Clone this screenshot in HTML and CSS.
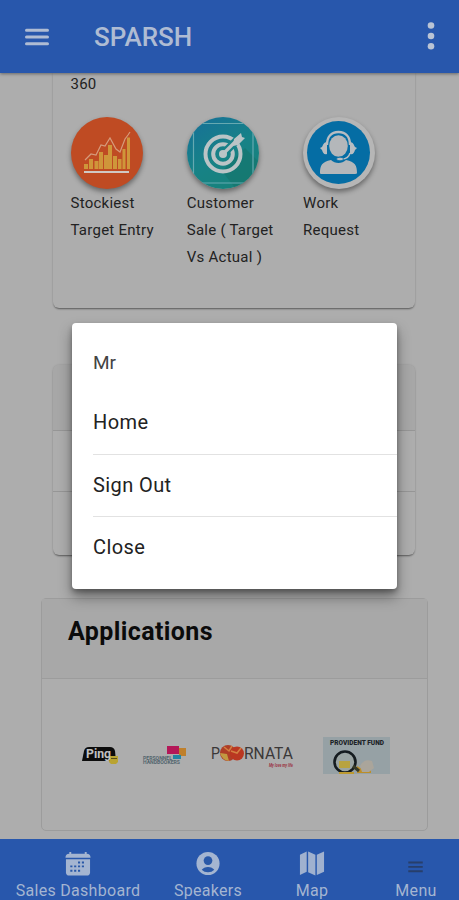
FILE: index.html
```
<!DOCTYPE html>
<html lang="en">
<head>
    <meta charset="UTF-8">
    <meta name="viewport" content="width=device-width, initial-scale=1.0">
    <title>SPARSH</title>
    <link rel="stylesheet" href="styles.css">
</head>
<body>
    <header class="navbar">
        <svg class="menu-icon" width="24" height="18" viewBox="0 0 24 18">
            <path d="M1.5 2.3h21M1.5 9h21M1.5 15.7h21" stroke="#afbcd3" stroke-width="3" stroke-linecap="round"/>
        </svg>
        <h1>SPARSH</h1>
        <svg class="more-icon" width="8" height="30" viewBox="0 0 8 30" fill="#bac4d5">
            <circle cx="4" cy="4.5" r="3.3"/>
            <circle cx="4" cy="15" r="3.3"/>
            <circle cx="4" cy="25.3" r="3.3"/>
        </svg>
    </header>

    <main class="content">
        <section class="card shortcuts">
            <div class="label-top">360</div>
            <div class="shortcut-row">
                <div class="shortcut">
                    <div class="circle orange">
                        <svg width="72" height="72" viewBox="0 0 72 72">
                            <path d="M13 52v-5h4v5zM18 52V42h4v10zM23.500 52v-8h4v8zM28 52V35h4v17zM33 52V38h4v14zM37 52V28h4v24zM42 52V39h4v13zM47 52V42h3.500v10zM51.500 52V32h3v20zM56 52V20.500h3V52z" fill="#cf963a"/>
                            <path d="M14 43l6-6 5 1 5-10 4 1 5-8 6 11 4 3 5-13 3-4 2-3" fill="none" stroke="#d69b7c" stroke-width="1.200"/>
                            <path d="M13 55h45" stroke="#d0c9c4" stroke-width="2"/>
                        </svg>
                    </div>
                    <p>Stockiest<br>Target Entry</p>
                </div>
                <div class="shortcut">
                    <div class="circle teal">
                        <svg width="72" height="72" viewBox="0 0 72 72">
                            <path d="M35 54L58 31 72 45v27H49z" fill="#146f68" opacity=".5"/>
                            <path d="M0 6.500h72M0 66h72M6.500 6v60M66 6v60" stroke="#66a9b1" stroke-width="1.200"/>
                            <g fill="none" stroke="#bac4c6">
                                <circle cx="36" cy="37" r="17.500" stroke-width="4"/>
                                <circle cx="36" cy="37" r="9.800" stroke-width="4"/>
                                <path d="M36 37l16-16" stroke="#178187" stroke-width="8"/>
                                <path d="M36 37l15-15" stroke-width="3.200"/>
                            </g>
                            <circle cx="36" cy="37" r="4" fill="#bac4c6"/>
                            <path d="M47 22l7-6 1 4 3 1-7 7-5 1z" fill="#bac4c6"/>
                        </svg>
                    </div>
                    <p>Customer<br>Sale ( Target<br>Vs Actual )</p>
                </div>
                <div class="shortcut">
                    <div class="circle blue">
                        <svg width="72" height="72" viewBox="0 0 72 72">
                            <circle cx="35.500" cy="35.500" r="31.500" fill="#056da4"/>
                            <path d="M24 28c0-8 4-13 11.500-13S47 20 47 28" fill="none" stroke="#b8bdc2" stroke-width="2.400"/>
                            <path d="M24 25c-3 0-4 3-5 5l-2 1 2 2c1 3 2 5 5 4zM47 25c3 0 4 3 5 5l2 1-2 2c-1 3-2 5-5 4z" fill="#b8bdc2"/>
                            <ellipse cx="35.500" cy="29" rx="9.300" ry="10.800" fill="#b4b7ba"/>
                            <path d="M47 36c-1 4-4 6-8 6" fill="none" stroke="#b8bdc2" stroke-width="1.400"/>
                            <path d="M17 56c0-8 2-11 11-13 4 4 11 4 15 0 9 2 11 5 11 13q0 1-2 1H18q-1 0-1-1z" fill="#b4b7ba"/>
                            <ellipse cx="37" cy="42" rx="3.500" ry="1.800" fill="#b8bdc2" stroke="#056da4" stroke-width=".8"/>
                        </svg>
                    </div>
                    <p>Work<br>Request</p>
                </div>
            </div>
        </section>

        <section class="card list-card">
            <div class="list-header"></div>
            <div class="list-row"></div>
            <div class="list-row"></div>
        </section>

        <section class="apps">
            <h2>Applications</h2>
            <div class="app-logos">
                <svg class="logo-ping" width="38" height="22" viewBox="0 0 38 22">
                    <path d="M0 17l2-10q1-4 5-4h21q4 0 5 4l1 10z" fill="#0c0c0c"/>
                    <path d="M28 12h8v6l-2 2h-5l-2-2z" fill="#b9a331"/>
                    <text x="4" y="14" font-size="12.500" font-weight="700" fill="#c1c1c1" textLength="25" lengthAdjust="spacingAndGlyphs">Ping</text>
                    <path d="M29 14.500h6" stroke="#594e1b"/>
                </svg>
                <svg class="logo-personnel" width="45" height="22" viewBox="0 0 45 22">
                    <path d="M25 2h12v8H25z" fill="#b41858"/>
                    <path d="M37 4h7v8h-7z" fill="#bf802c"/>
                    <path d="M31 11h8v4h-8z" fill="#2285a4"/>
                    <text x="1" y="15.500" font-size="5.500" font-weight="700" fill="#53656d" textLength="29" lengthAdjust="spacingAndGlyphs">PERSONNEL</text>
                    <text x="1" y="20" font-size="5.500" font-weight="700" fill="#53656d" textLength="37" lengthAdjust="spacingAndGlyphs">HANDBOOKERS</text>
                </svg>
                <svg class="logo-poornata" width="88" height="32" viewBox="0 -2 88 32">
                    <text x="0" y="18" font-size="17" fill="#3b3838" textLength="9" lengthAdjust="spacingAndGlyphs">P</text>
                    <circle cx="17" cy="12" r="8" fill="#ae3e27"/>
                    <circle cx="26" cy="12.500" r="7" fill="#ba3721"/>
                    <path d="M9 12l7 1 2 7q-7-1-9-8z" fill="#c29941"/>
                    <path d="M13 6l5 4 3-5M20 10l6 2 4-5" fill="none" stroke="#d38042" stroke-width="1.500"/>
                    <text x="33" y="18" font-size="17" fill="#3b3838" textLength="49" lengthAdjust="spacingAndGlyphs">RNATA</text>
                    <text x="58" y="25.500" font-size="4.500" font-weight="700" font-style="italic" fill="#9b3344" textLength="24" lengthAdjust="spacingAndGlyphs">My love my life</text>
                </svg>
                <svg class="logo-fund" width="68" height="38" viewBox="0 0 68 38">
                    <path d="M1 1h67v37H1z" fill="#96a1a5"/>
                    <text x="8" y="8.500" font-size="7" font-weight="900" fill="#1d2428" textLength="54" lengthAdjust="spacingAndGlyphs">PROVIDENT FUND</text>
                    <path d="M35 30l5 3 4-2v6h-9zM40 34h9v3h-9z" fill="#bd8e28"/>
                    <path d="M38 30q4-8 12-5l2 7-5 4h-7z" fill="#aaa59b"/>
                    <circle cx="23" cy="26" r="10.500" fill="#9aa4a3" stroke="#151c20" stroke-width="2.600"/>
                    <path d="M17 25h11v7H17z" fill="#b8a340"/>
                    <path d="M31 30l6 5" stroke="#373a27" stroke-width="3"/>
                    <path d="M17 37h15" stroke="#bd9a31" stroke-width="2"/>
                </svg>
            </div>
        </section>
    </main>

    <nav class="tabs">
        <a class="tab tab-sales">
            <svg width="28" height="28" viewBox="0 0 28 28">
                <path d="M5 2h2v2h14V2h2v2q4 0 4 4H1q0-4 4-4z" fill="#a4b5d1"/>
                <path d="M1.500 9.500h25V23q0 3.500-3.500 3.500H5Q1.500 26.500 1.500 23z" fill="#a4b5d1"/>
                <path d="M14 13h2.200M18 13h2.200M6 17h2.200M10 17h2.200M14 17h2.200M18 17h2.200M6 21.500h2.200M10 21.500h2.200M14 21.500h2.200" stroke="#2958a8" stroke-width="2"/>
            </svg>
            <span>Sales Dashboard</span>
        </a>
        <a class="tab">
            <svg width="28" height="28" viewBox="0 0 28 28">
                <circle cx="14" cy="14" r="12" fill="#a4b5d1"/>
                <circle cx="14" cy="11" r="4.500" fill="#2958a8"/>
                <path d="M7.500 20.500q2-3 6.500-3t6.500 3q-2.500 2.700-6.500 2.700t-6.500-2.700z" fill="#2958a8"/>
            </svg>
            <span>Speakers</span>
        </a>
        <a class="tab">
            <svg width="28" height="28" viewBox="0 0 28 28" fill="#a0b1cf">
                <path d="M1.500 5L8.500 1.500v21L1.500 26z"/>
                <path d="M10 1.500L17.500 5v21.500L10 23z"/>
                <path d="M19 5l7.500-3.500v21L19 26z"/>
            </svg>
            <span>Map</span>
        </a>
        <a class="tab">
            <svg width="28" height="28" viewBox="0 0 28 28">
                <path d="M6 13h15M6 17.500h15M6 22h15" stroke="#273f6b" stroke-width="2"/>
            </svg>
            <span>Menu</span>
        </a>
    </nav>

    <div class="popup">
        <div class="popup-title">Mr</div>
        <a class="popup-item">Home</a>
        <a class="popup-item">Sign Out</a>
        <a class="popup-item last">Close</a>
    </div>
</body>
</html>
```

FILE: styles.css
```
* {
    box-sizing: border-box;
}

body {
    font-family: Roboto, Arial, sans-serif;
    background-color: #adadad;
    color: #222;
    margin: 0;
    height: 900px;
    display: flex;
    flex-direction: column;
    overflow: hidden;
    position: relative;
}

svg {
    display: block;
}

.navbar {
    height: 73px;
    flex: none;
    display: flex;
    align-items: center;
    padding: 0 24px 0 25px;
    background-color: #2857ac;
    box-shadow: 0 1px 3px rgba(0, 0, 0, 0.4);
    z-index: 1;
}

.navbar h1 {
    margin: 0 0 0 45px;
    font-size: 26px;
    font-weight: 500;
    color: #afbcd3;
}

.more-icon {
    margin: -2px 0 0 auto;
}

.content {
    flex: 1;
    min-height: 0;
    overflow: hidden;
}

.card {
    width: 362px;
    margin-left: 53px;
    border-radius: 6px;
    box-shadow: 0 2px 2px -1px rgba(0, 0, 0, 0.45), 0 0 2px rgba(0, 0, 0, 0.18);
}

.shortcuts {
    height: 235px;
    padding-left: 17.5px;
    border-radius: 0 0 6px 6px;
}

.label-top {
    height: 44px;
    line-height: 22px;
    font-size: 15px;
    letter-spacing: 0.2px;
}

.shortcut-row {
    display: flex;
}

.shortcut {
    width: 116.3px;
    flex: none;
}

.shortcut p {
    margin: 0;
    padding-top: 1px;
    font-size: 15px;
    line-height: 27.2px;
    letter-spacing: 0.25px;
    white-space: nowrap;
}

.circle {
    width: 72px;
    height: 72px;
    border-radius: 50%;
    overflow: hidden;
    box-shadow: 0 3px 5px rgba(0, 0, 0, 0.4);
}

.orange {
    background-color: #bf4b23;
}

.teal {
    background: linear-gradient(150deg, #176f99, #178287 50%, #178276);
}

.blue {
    background-color: #b6b6b6;
}

.list-card {
    height: 190px;
    margin-top: 57px;
    overflow: hidden;
}

.list-header {
    height: 66px;
    background-color: #a7a7a7;
    border-bottom: 1px solid #969696;
}

.list-row {
    height: 61px;
    border-bottom: 1px solid #969696;
}

.list-row:last-child {
    border-bottom: none;
}

.apps {
    width: 387px;
    height: 233px;
    margin: 43px 0 0 41px;
    border: 1px solid #9c9c9c;
    border-radius: 5px;
}

.apps h2 {
    height: 80px;
    margin: 0;
    padding: 17px 26px;
    border-bottom: 1px solid #9c9c9c;
    background-color: #a8a8a8;
    color: #0b0b0b;
    font-size: 25px;
    font-weight: 700;
    line-height: 32px;
    letter-spacing: 0.4px;
}

.app-logos {
    display: flex;
    align-items: center;
    height: 151px;
    padding-left: 40px;
}

.logo-personnel {
    margin-left: 22px;
}

.logo-poornata {
    margin-left: 24px;
}

.logo-fund {
    margin-left: 23px;
}

.tabs {
    height: 61px;
    flex: none;
    display: flex;
    background-color: #2857ac;
    overflow: hidden;
}

.tab {
    width: 104px;
    flex: none;
    display: flex;
    flex-direction: column;
    align-items: center;
    padding-top: 11px;
    color: #a4b5d1;
    font-size: 16px;
    line-height: 18px;
    letter-spacing: 0.3px;
    white-space: nowrap;
}

.tab span {
    margin-top: 5px;
}

.tab-sales {
    width: 156px;
}

.popup {
    position: absolute;
    top: 323px;
    left: 72px;
    width: 325px;
    height: 266px;
    padding: 19px 0 0 21px;
    background-color: #fff;
    border-radius: 4px;
    box-shadow: 0 8px 14px rgba(0, 0, 0, 0.38), 0 3px 5px rgba(0, 0, 0, 0.28);
    color: #222;
    z-index: 10;
}

.popup-title {
    height: 50px;
    line-height: 42px;
    font-size: 19px;
    color: #444;
}

.popup-item {
    display: block;
    height: 62.5px;
    line-height: 61px;
    font-size: 20px;
    letter-spacing: 0.4px;
    border-bottom: 1px solid #e2e2e2;
}

.popup-item.last {
    border-bottom: none;
}
```
